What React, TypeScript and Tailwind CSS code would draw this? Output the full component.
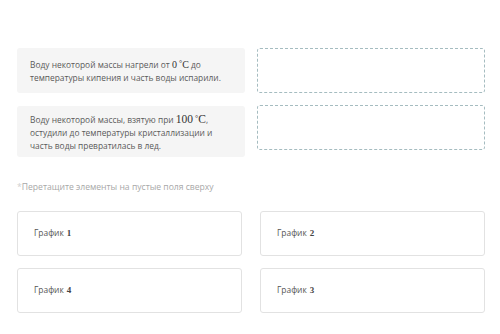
import React from 'react';

const Deg: React.FC<{ v: string; big?: boolean }> = ({ v, big }) => (
  <span className={`font-['Liberation_Serif',serif] text-[#333] ${big ? 'text-[11.5px]' : 'text-[10px]'}`}>
    {v}
    <span className="ml-[2px] text-[8px] align-[2px]">°</span>C
  </span>
);

const App: React.FC = () => {
  const cards = ['1', '2', '4', '3'];
  return (
    <div className="w-[500px] h-[334px] bg-white font-['Open_Sans',sans-serif] text-[#5a5a5a] overflow-hidden">
      <div className="pl-[17px] pr-[15px] pt-[48px]">
        {/* Statements and drop zones */}
        <div className="grid grid-cols-[228px_228px] gap-x-[12px] gap-y-[13px] items-start">
          <div className="h-[45px] bg-[#f5f5f5] rounded-[3px] px-[13px] pt-[9px] text-[8.4px] leading-[13px]">
            Воду некоторой массы нагрели от <Deg v="0" /> до
            <br />
            температуры кипения и часть воды испарили.
          </div>
          <div className="h-[45px] border border-dashed border-[#a5bcc0] rounded-[3px]" />
          <div className="h-[51px] bg-[#f5f5f5] rounded-[3px] px-[13px] pt-[6px] text-[8.4px] leading-[13px]">
            Воду некоторой массы, взятую при <Deg v="100" big />,
            <br />
            остудили до температуры кристаллизации и
            <br />
            часть воды превратилась в лед.
          </div>
          <div className="h-[45px] -mt-[1px] border border-dashed border-[#a5bcc0] rounded-[3px]" />
        </div>

        <p className="mt-[24px] text-[8.6px] leading-[12px] text-[#a8a8a8]">
          <span className="text-[#d0d0d0]">*</span>Перетащите элементы на пустые поля сверху
        </p>

        {/* Draggable items */}
        <div className="mt-[18px] grid grid-cols-[225px_225px] gap-x-[18px] gap-y-[12px]">
          {cards.map((n) => (
            <div
              key={n}
              className="h-[45px] border border-[#e2e2e2] rounded-[3px] flex items-center px-[16px] text-[8.4px] text-[#555]"
            >
              График <span className="ml-[3px] font-['Liberation_Serif',serif] font-bold text-[9px] text-[#444]">{n}</span>
            </div>
          ))}
        </div>
      </div>
    </div>
  );
};

export default App;
